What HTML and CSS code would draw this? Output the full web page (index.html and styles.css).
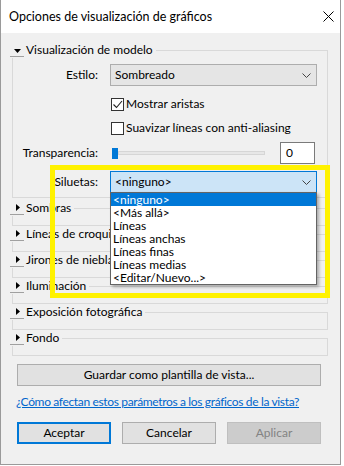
FILE: index.html
```html
<!DOCTYPE html>
<html>
<head>
	<meta charset="UTF-8">
	<title>Opciones de visualización de gráficos</title>
	<link rel="stylesheet" href="styles.css">
</head>
<body>
	<div class="dialog">
		<div class="titlebar">
			<span>Opciones de visualización de gráficos</span>
			<svg class="close" width="11" height="11" viewBox="0 0 11 11"><path d="M0.5 0.5l10 10M10.5 0.5l-10 10" stroke="#000" stroke-width="1"/></svg>
		</div>
		<div class="content">
			<fieldset class="group model">
				<legend><svg class="exp" width="14" height="13" viewBox="0 0 14 13"><path d="M4 5h7l-3.5 4z" fill="#000"/><path d="M0 12.5h14" stroke="#a0a0a0"/></svg>Visualización de modelo</legend>
				<div class="row r-estilo">
					<label class="lbl">Estilo:</label>
					<div class="select">Sombreado<svg class="chev" width="9" height="5" viewBox="0 0 9 5"><path d="M0.5 0.5l4 4 4-4" fill="none" stroke="#444"/></svg></div>
				</div>
				<div class="check r-mostrar"><span class="cb"><svg width="11" height="11" viewBox="0 0 11 11"><path d="M1.5 5.5l3 3 5.5-6.5" fill="none" stroke="#222" stroke-width="1.1"/></svg></span>Mostrar aristas</div>
				<div class="check r-suavizar"><span class="cb"></span>Suavizar líneas con anti-aliasing</div>
				<div class="row r-trans">
					<label class="lbl">Transparencia:</label>
					<div class="slider"><span class="thumb"></span><span class="track"></span></div>
					<div class="num">0</div>
				</div>
				<div class="row r-silu">
					<label class="lbl">Siluetas:</label>
					<div class="select focus">&lt;ninguno&gt;<svg class="chev" width="9" height="5" viewBox="0 0 9 5"><path d="M0.5 0.5l4 4 4-4" fill="none" stroke="#444"/></svg>
						<ul class="dropdown">
							<li class="sel">&lt;ninguno&gt;</li>
							<li>&lt;Más allá&gt;</li>
							<li>Líneas</li>
							<li>Líneas anchas</li>
							<li>Líneas finas</li>
							<li>Líneas medias</li>
							<li>&lt;Editar/Nuevo...&gt;</li>
						</ul>
					</div>
				</div>
			</fieldset>
			<fieldset class="group closed first"><legend><svg class="exp" width="14" height="13" viewBox="0 0 14 13"><path d="M6 2v7l4-3.5z" fill="#000"/><path d="M0 12.5h14" stroke="#a0a0a0"/></svg>Sombras</legend></fieldset>
			<fieldset class="group closed"><legend><svg class="exp" width="14" height="13" viewBox="0 0 14 13"><path d="M6 2v7l4-3.5z" fill="#000"/><path d="M0 12.5h14" stroke="#a0a0a0"/></svg>Líneas de croquis</legend></fieldset>
			<fieldset class="group closed"><legend><svg class="exp" width="14" height="13" viewBox="0 0 14 13"><path d="M6 2v7l4-3.5z" fill="#000"/><path d="M0 12.5h14" stroke="#a0a0a0"/></svg>Jirones de niebla</legend></fieldset>
			<fieldset class="group closed"><legend><svg class="exp" width="14" height="13" viewBox="0 0 14 13"><path d="M6 2v7l4-3.5z" fill="#000"/><path d="M0 12.5h14" stroke="#a0a0a0"/></svg>Iluminación</legend></fieldset>
			<fieldset class="group closed"><legend><svg class="exp" width="14" height="13" viewBox="0 0 14 13"><path d="M6 2v7l4-3.5z" fill="#000"/><path d="M0 12.5h14" stroke="#a0a0a0"/></svg>Exposición fotográfica</legend></fieldset>
			<fieldset class="group closed"><legend><svg class="exp" width="14" height="13" viewBox="0 0 14 13"><path d="M6 2v7l4-3.5z" fill="#000"/><path d="M0 12.5h14" stroke="#a0a0a0"/></svg>Fondo</legend></fieldset>

			<button class="btn wide">Guardar como plantilla de vista...</button>
			<a class="help" href="#">¿Cómo afectan estos parámetros a los gráficos de la vista?</a>
			<div class="actions">
				<button class="btn primary">Aceptar</button>
				<button class="btn">Cancelar</button>
				<button class="btn off">Aplicar</button>
			</div>
		</div>
		<div class="mark"></div>
	</div>
</body>
</html>
```
FILE: styles.css
```css
* { box-sizing: border-box; }
body { margin: 0; background: #fff; font: 12px/16px Lato, "Noto Sans", sans-serif; color: #000; }
.dialog { position: relative; width: 341px; height: 465px; border: 1px solid #9a9a9a; border-top: none; background: #f0f0f0; }
.titlebar { display: flex; align-items: center; justify-content: space-between; height: 33px; padding: 0 6px 0 8px; background: #fff; font-size: 12.5px; }
.content { padding: 9px 0 0 11px; }

fieldset.group { margin: 0; padding: 0; width: 316px; border: 1px solid #d9d9d9; }
legend { margin-left: -3px; padding: 0 3px 0 0; line-height: 16px; }
.exp { vertical-align: -3px; margin-right: 2px; background: #f0f0f0; }
.model { padding-bottom: 4px !important; }
.closed { margin-top: 4px; padding-bottom: 9px !important; }
.closed.first { margin-top: 2px; }

.row { display: flex; align-items: center; height: 22px; }
.lbl { width: 85px; margin-right: 12px; text-align: right; }
.r-estilo { margin-top: 6px; }
.r-trans { margin-top: 6px; }
.r-silu { margin-top: 7px; }
.select { position: relative; display: flex; align-items: center; justify-content: space-between; width: 207px; height: 22px; padding: 0 5px 0 4px; background: #e5e5e5; border: 1px solid #adadad; }
.select.focus { background: #cce4f7; border-color: #0078d7; }
.chev { margin-top: 1px; }

.check { display: flex; align-items: center; height: 16px; padding-left: 98px; }
.r-mostrar { margin-top: 10px; }
.r-suavizar { margin-top: 8px; }
.cb { display: flex; align-items: center; justify-content: center; width: 13px; height: 13px; margin-right: 2px; background: #fff; border: 1px solid #333; }

.slider { display: flex; align-items: center; width: 155px; }
.thumb { width: 6px; height: 11px; margin-left: 2px; background: #0078d7; }
.track { flex: 1; height: 4px; background: #e7e7e7; border: 1px solid #d6d6d6; }
.num { width: 35px; height: 22px; margin-left: 15px; padding-left: 5px; line-height: 20px; background: #fff; border: 1px solid #7a7a7a; }

.dropdown { position: absolute; top: 100%; left: -1px; width: calc(100% + 2px); margin: 0; padding: 0; list-style: none; background: #fff; border: 1px solid #646464; box-shadow: 2px 2px 3px rgba(0, 0, 0, 0.3); z-index: 2; }
.dropdown li { height: 13px; line-height: 13px; padding-left: 2px; white-space: nowrap; }
.dropdown li.sel { background: #0078d7; color: #fff; }

.btn { display: block; height: 22px; padding: 0; font: inherit; color: #000; background: #e1e1e1; border: 1px solid #adadad; }
.wide { width: 304px; margin: 8px 0 0 5px; }
.help { display: block; margin: 8px 0 0 4px; color: #0066cc; line-height: 16px; letter-spacing: -0.35px; }
.actions { display: flex; gap: 11px; margin: 12px 0 0 5px; }
.actions .btn { width: 94px; }
.btn.primary { border: 2px solid #0078d7; }
.btn.off { background: #cccccc; border-color: #bfbfbf; color: #838383; }

.mark { position: absolute; left: 49px; top: 165px; width: 280px; height: 133px; border: 5px solid #fff200; z-index: 3; }
```
